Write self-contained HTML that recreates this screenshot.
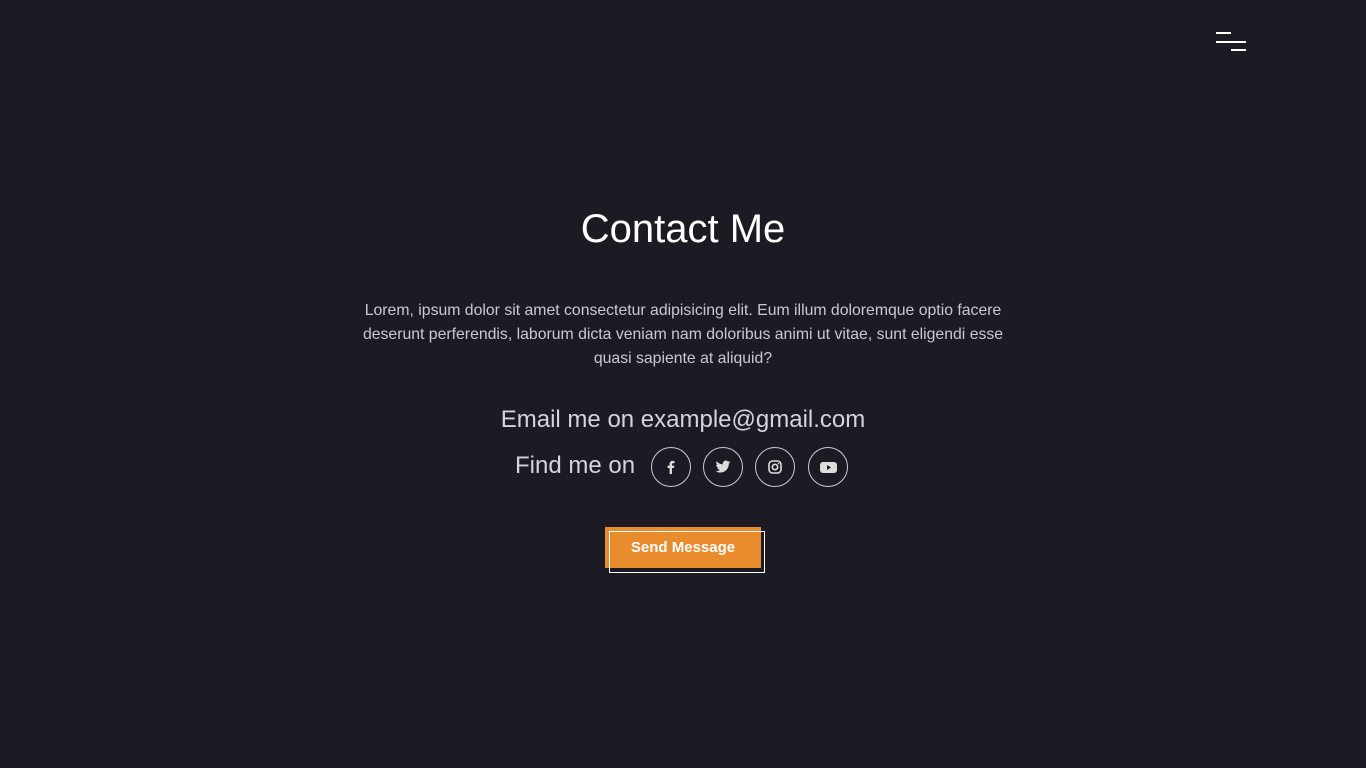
<!DOCTYPE html>
<html><head><style>
html,body{margin:0;padding:0;width:1366px;height:768px;background:#1c1b23;overflow:hidden;font-family:"Liberation Sans",sans-serif;}
.bar{position:absolute;height:2px;background:#fff}
h1{position:absolute;top:204px;left:0;width:1366px;text-align:center;margin:0;font-weight:400;font-size:40px;color:#fff;line-height:50px}
p{position:absolute;top:299px;left:283px;width:800px;text-align:center;margin:0;font-size:15.8px;line-height:24px;color:#c9c9cf}
.email{position:absolute;top:405px;left:0;width:1366px;text-align:center;font-size:24px;color:#d4d4da;line-height:30px}
.find{position:absolute;top:451px;left:515px;font-size:24px;color:#d4d4da;line-height:30px}
.c{position:absolute;top:447px;width:38px;height:38px;border:1px solid #ccc;border-radius:50%;display:flex;align-items:center;justify-content:center}
.btn{position:absolute;left:605px;top:527px;width:156px;height:41px;background:#e98c2e;color:#fff;font-weight:bold;font-size:15px;text-align:center;line-height:41px}
.bb{position:absolute;left:609px;top:531px;width:154px;height:40px;border:1px solid #fff}
</style></head><body>
<div class="bar" style="left:1216px;top:32px;width:15px"></div>
<div class="bar" style="left:1216px;top:41px;width:30px"></div>
<div class="bar" style="left:1231px;top:49px;width:15px"></div>
<h1>Contact Me</h1>
<p>Lorem, ipsum dolor sit amet consectetur adipisicing elit. Eum illum doloremque optio facere<br>deserunt perferendis, laborum dicta veniam nam doloribus animi ut vitae, sunt eligendi esse<br>quasi sapiente at aliquid?</p>
<div class="email">Email me on example@gmail.com</div>
<div class="find">Find me on</div>
<div class="c" style="left:651px"><svg width="16" height="16" viewBox="0 0 16 16"><path d="M9 15V9h2l.4-2.4H9V5.3c0-.7.3-1.2 1.3-1.2h1.2V2c-.4 0-1.1-.1-1.9-.1C7.8 1.9 6.6 3 6.6 5v1.6H4.6V9h2v6z" fill="#ddd"/></svg></div>
<div class="c" style="left:703px"><svg width="16" height="16" viewBox="0 0 24 24"><path d="M23 4.6a9 9 0 0 1-2.6.7 4.6 4.6 0 0 0 2-2.5 9 9 0 0 1-2.9 1.1A4.5 4.5 0 0 0 11.8 8 12.8 12.8 0 0 1 2.5 3.3a4.5 4.5 0 0 0 1.4 6A4.5 4.5 0 0 1 1.8 8.7a4.5 4.5 0 0 0 3.6 4.5 4.5 4.5 0 0 1-2 .1 4.5 4.5 0 0 0 4.2 3.1A9 9 0 0 1 1 18.3 12.8 12.8 0 0 0 7.9 20.3c8.3 0 12.8-6.9 12.8-12.8v-.6A9 9 0 0 0 23 4.6z" fill="#ddd"/></svg></div>
<div class="c" style="left:755px"><svg width="14" height="14" viewBox="0 0 14 14"><rect x="1" y="1" width="12" height="12" rx="3.5" fill="none" stroke="#ddd" stroke-width="1.6"/><circle cx="7" cy="7" r="2.7" fill="none" stroke="#ddd" stroke-width="1.6"/><circle cx="10.5" cy="3.5" r=".8" fill="#ddd"/></svg></div>
<div class="c" style="left:808px"><svg width="17" height="13" viewBox="0 0 17 13"><rect x="0" y="1" width="17" height="11" rx="3" fill="#ddd"/><path d="M7 4v5l4-2.5z" fill="#1c1b23"/></svg></div>
<div class="btn">Send Message</div>
<div class="bb"></div>
</body></html>
